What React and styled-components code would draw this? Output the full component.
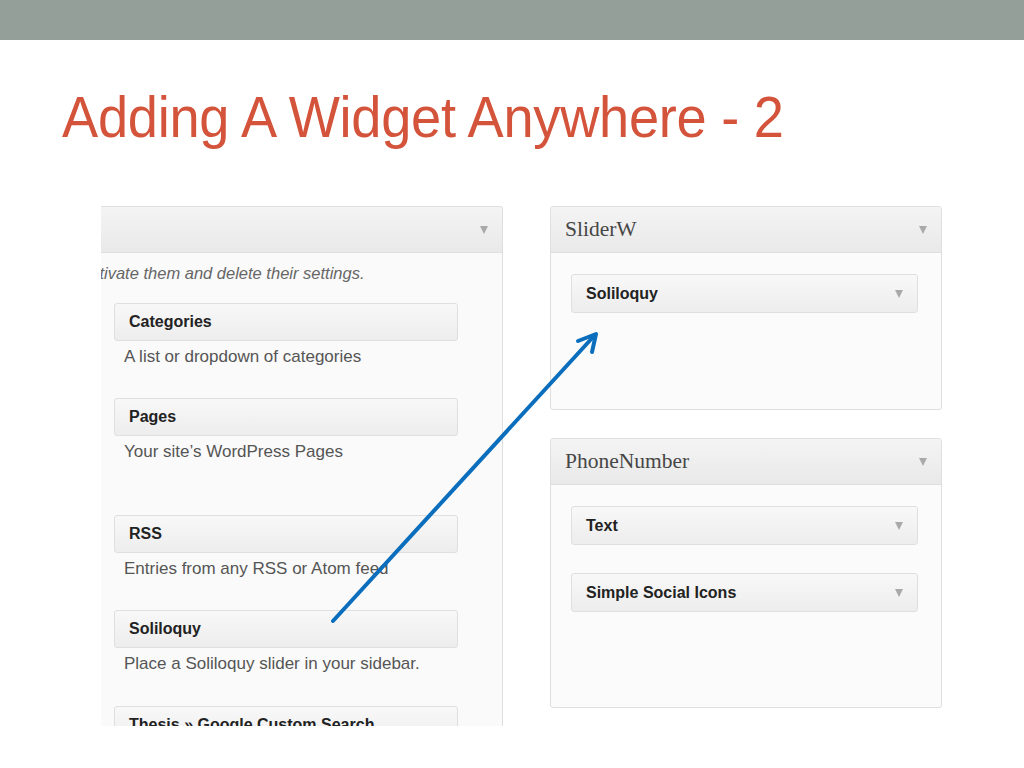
import React from "react";
import styled, { createGlobalStyle } from "styled-components";

const Global = createGlobalStyle`
  html, body { margin: 0; padding: 0; background: #ffffff; }
  body { font-family: "Liberation Sans", Arial, sans-serif; }
`;

const Page = styled.div`
  position: relative;
  width: 1024px;
  height: 768px;
  overflow: hidden;
  background: #ffffff;
`;

const TopBar = styled.div`
  height: 40px;
  background: #949f99;
`;

const Title = styled.h1`
  margin: 48px 0 0 62px;
  font-family: "Liberation Sans", Arial, sans-serif;
  font-weight: normal;
  font-size: 58px;
  line-height: 58px;
  letter-spacing: -0.3px;
  color: #d4533b;
  white-space: nowrap;
  transform: scaleX(0.935);
  transform-origin: left center;
`;

const Content = styled.div`
  display: flex;
  align-items: flex-start;
  margin-top: 60px;
  padding-left: 101px;
  gap: 47px;
`;

const LeftPanel = styled.div`
  width: 401px;
  height: 519px;
  overflow: hidden;
  border-top: 1px solid #dfdfdf;
  border-right: 1px solid #dfdfdf;
  border-top-right-radius: 3px;
  background: #fafafa;
`;

const PanelHeader = styled.div`
  height: 45px;
  display: flex;
  align-items: center;
  justify-content: space-between;
  padding: 0 14px;
  background: linear-gradient(#f4f4f4, #e9e9e9);
  border-bottom: 1px solid #dfdfdf;
`;

const HeaderTitle = styled.span`
  font-family: "Liberation Serif", "Times New Roman", serif;
  font-size: 21.5px;
  color: #464646;
`;

const Caret = styled.span`
  width: 0;
  height: 0;
  border-left: 4px solid transparent;
  border-right: 4px solid transparent;
  border-top: 8px solid #a9a9a9;
  margin-right: ${p => p.$mr || 0}px;
`;

const LeftBody = styled.div`
  padding: 10px 44px 0 13px;
`;

const Note = styled.div`
  font-style: italic;
  font-size: 16.5px;
  color: #666;
  white-space: nowrap;
  line-height: 20px;
  margin-left: -13px;
  overflow: hidden;
`;

const NoteInner = styled.span`
  display: inline-block;
  margin-left: -19px;
`;

const WidgetList = styled.div`
  display: flex;
  flex-direction: column;
  margin-top: 20px;
`;

const WidgetEntry = styled.div`
  margin-bottom: ${p => p.$gap}px;
`;

const WidgetBar = styled.div`
  height: ${p => p.$h}px;
  display: flex;
  align-items: center;
  justify-content: space-between;
  padding: 0 13px 0 14px;
  border: 1px solid #dfdfdf;
  border-radius: 3px;
  background: linear-gradient(#f8f8f8, #ededed);
`;

const WidgetName = styled.span`
  font-weight: bold;
  font-size: 16px;
  color: #222;
`;

const WidgetDesc = styled.div`
  font-size: 17px;
  color: #555;
  margin: 6px 0 0 10px;
  line-height: 20px;
`;

const RightColumn = styled.div`
  display: flex;
  flex-direction: column;
  gap: 28px;
  width: 392px;
`;

const Sidebar = styled.div`
  height: ${p => p.$h}px;
  box-sizing: border-box;
  border: 1px solid #dfdfdf;
  border-radius: 3px;
  background: #fbfbfb;
  overflow: hidden;
`;

const SidebarBody = styled.div`
  display: flex;
  flex-direction: column;
  gap: 28px;
  padding: 21px 23px 0 20px;
`;

const Overlay = styled.svg`
  position: absolute;
  left: 0;
  top: 0;
  pointer-events: none;
`;

const leftWidgets = [
  { name: "Categories", desc: "A list or dropdown of categories", gap: 31 },
  { name: "Pages", desc: "Your site’s WordPress Pages", gap: 53 },
  { name: "RSS", desc: "Entries from any RSS or Atom feed", gap: 31 },
  { name: "Soliloquy", desc: "Place a Soliloquy slider in your sidebar.", gap: 32 },
  { name: "Thesis » Google Custom Search", desc: "", gap: 0 },
];

function SidebarWidget({ name }) {
  return (
    <WidgetBar $h={37}>
      <WidgetName>{name}</WidgetName>
      <Caret $mr={1} />
    </WidgetBar>
  );
}

export default function App() {
  return (
    <Page>
      <Global />
      <TopBar />
      <Title>Adding A Widget Anywhere - 2</Title>
      <Content>
        <LeftPanel>
          <PanelHeader>
            <span />
            <Caret $mr={0} />
          </PanelHeader>
          <LeftBody>
            <Note>
              <NoteInner>activate them and delete their settings.</NoteInner>
            </Note>
            <WidgetList>
              {leftWidgets.map(w => (
                <WidgetEntry key={w.name} $gap={w.gap}>
                  <WidgetBar $h={36}>
                    <WidgetName>{w.name}</WidgetName>
                  </WidgetBar>
                  {w.desc && <WidgetDesc>{w.desc}</WidgetDesc>}
                </WidgetEntry>
              ))}
            </WidgetList>
          </LeftBody>
        </LeftPanel>
        <RightColumn>
          <Sidebar $h={204}>
            <PanelHeader>
              <HeaderTitle>SliderW</HeaderTitle>
              <Caret $mr={0} />
            </PanelHeader>
            <SidebarBody>
              <SidebarWidget name="Soliloquy" />
            </SidebarBody>
          </Sidebar>
          <Sidebar $h={270}>
            <PanelHeader>
              <HeaderTitle>PhoneNumber</HeaderTitle>
              <Caret $mr={0} />
            </PanelHeader>
            <SidebarBody>
              <SidebarWidget name="Text" />
              <SidebarWidget name="Simple Social Icons" />
            </SidebarBody>
          </Sidebar>
        </RightColumn>
      </Content>
      <Overlay width="1024" height="768" viewBox="0 0 1024 768">
        <g stroke="#0a6ebd" strokeWidth="4" strokeLinecap="round" fill="none">
          <line x1="333" y1="621" x2="594" y2="336" />
          <polyline points="578,341 596,334 592,352" strokeLinejoin="round" />
        </g>
      </Overlay>
    </Page>
  );
}
